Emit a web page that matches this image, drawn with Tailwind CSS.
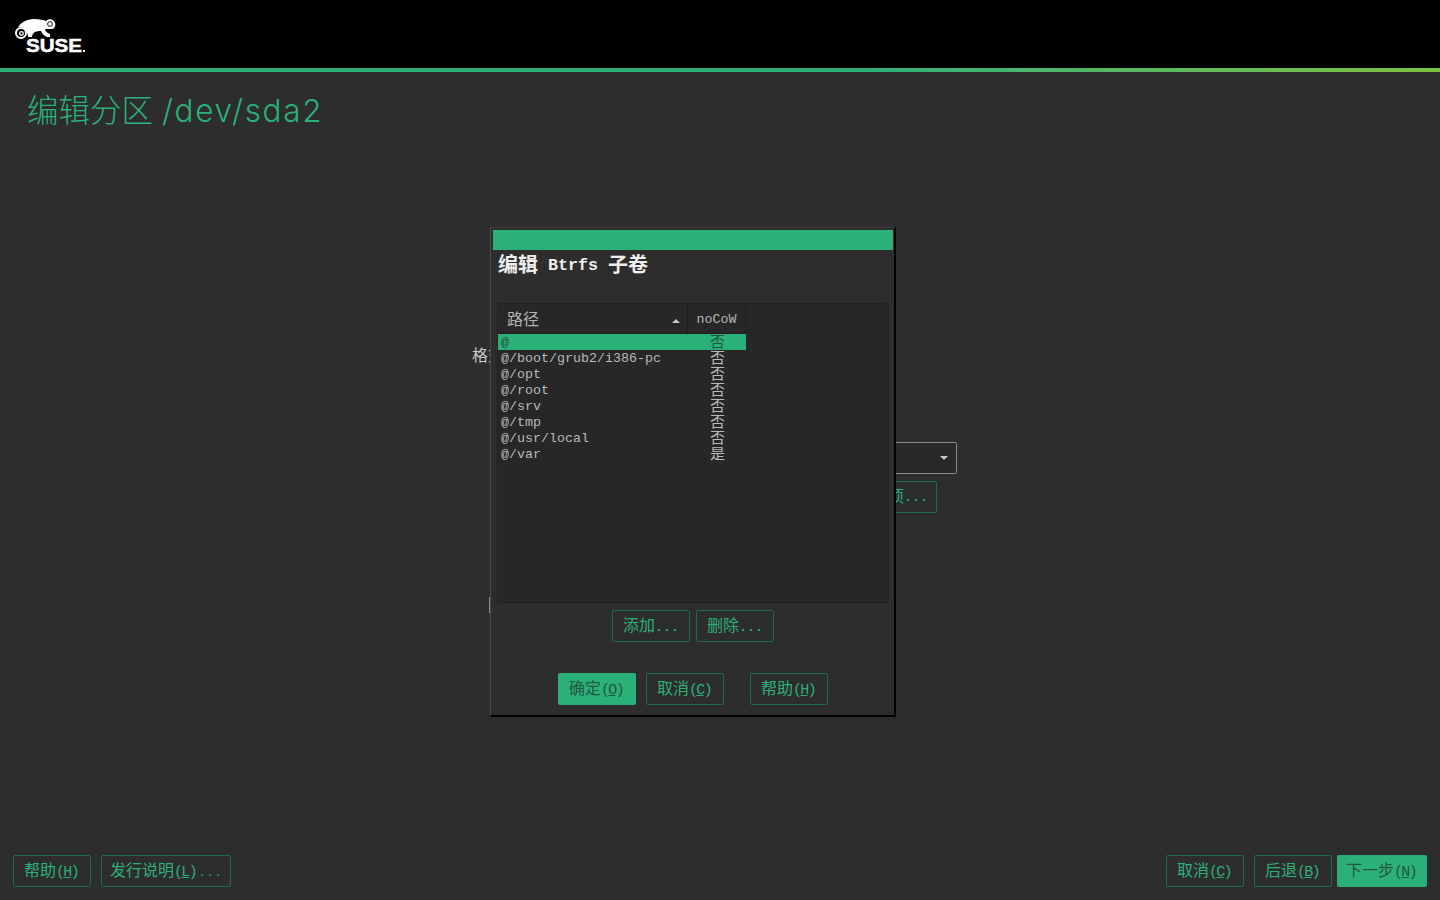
<!DOCTYPE html>
<html lang="zh-CN">
<head>
  <meta charset="UTF-8" />
  <title>编辑分区 /dev/sda2</title>
  <script src="https://cdn.jsdelivr.net/npm/@tailwindcss/browser@4"></script>
</head>
<body class="bg-[#2d2d2d] font-['Liberation_Mono','Noto_Sans_CJK_SC',monospace] overflow-hidden">
  <div class="relative flex flex-col w-[1440px] h-[900px]">
    <header class="h-[68px] bg-black pl-[14px] pt-[18px]">
      <svg width="74" height="42" viewBox="0 0 74 42" class="block">
        <path fill="#fff" d="M4 9C7 5 12 1 20 1c5 0 9 1 12 2 3-3 8-2 9 2 1 4-1 6-4 6h-6c0 2 2 4 5 5v3h-3c-3-1-5-4-6-6-2 0-4 0-6 1-2 1-3 3-3 5h-4c0-4-3-8-6-10-1 0-3 0-4 0z"/>
        <circle cx="7" cy="15" r="5" fill="#000" stroke="#fff" stroke-width="2"/>
        <circle cx="7.5" cy="15.5" r="1.8" fill="none" stroke="#fff" stroke-width="1.3"/>
        <circle cx="36" cy="6" r="2.4" fill="none" stroke="#000" stroke-width="0.9"/>
        <text x="12" y="34" fill="#fff" stroke="#fff" stroke-width="0.5" font-family="Liberation Sans" font-weight="700" font-size="19" textLength="56" lengthAdjust="spacingAndGlyphs">SUSE</text>
        <rect x="69" y="32" width="2" height="2" fill="#fff"/>
      </svg>
    </header>
    <div class="h-1 bg-gradient-to-r from-[#2bb07a] from-60% to-[#7fc13d]"></div>

    <h1 class="pl-[27px] pt-[17px] h-[50px] text-[31.5px] leading-[44px] font-light text-[#2bb07a] font-['Inter','Noto_Sans_CJK_SC',sans-serif]">编辑分区 <span class="tracking-[1.7px]">/dev/sda2</span></h1>

    <!-- form behind the dialog -->
    <main class="flex-1 relative">
      <div class="ml-[472px] w-[485px] pt-[223px] flex flex-col text-[16px] text-[#c8c8c8]">
        <div class="h-[24px] leading-[24px]">格式</div>
        <div class="mt-[73px] self-end w-[200px] h-[32px] border border-[#8a8a8a] rounded-[2px] bg-[#282828] flex items-center justify-end pr-[8px]">
          <span class="border-x-[4px] border-x-transparent border-t-[4px] border-t-[#c8c8c8]"></span>
        </div>
        <div class="mt-[7px] mr-[20px] self-end w-[160px] h-[32px] border border-[#1c6b4c] rounded-[2px] text-[#2bb07a] flex items-center justify-end pr-[8px] pt-px">格式选项<span class="text-[13.33px] font-bold">...</span></div>
        <div class="mt-[84px] ml-[17px] w-[20px] h-[16px] border-l border-[#8a8a8a]"></div>
      </div>
    </main>

    <footer class="h-[45px] pl-[13px] pr-[13px] flex text-[16px] text-[#2bb07a]">
      <button class="w-[78px] h-[32px] pt-[2px] pr-[2px] border border-[#1c6b4c] rounded-[2px]">帮助<span class="text-[15px] tracking-[-1.7px]">(<u>H</u>)</span></button>
      <button class="ml-[10px] w-[130px] h-[32px] pt-[2px] border border-[#1c6b4c] rounded-[2px]">发行说明<span class="text-[15px] tracking-[-1.7px]">(<u>L</u>)</span><span class="text-[13.33px] text-[#1f8a5f] font-bold pl-[2px]">...</span></button>
      <button class="ml-auto w-[78px] h-[32px] pt-[2px] pr-[2px] border border-[#1c6b4c] rounded-[2px]">取消<span class="text-[15px] tracking-[-1.7px]">(<u>C</u>)</span></button>
      <button class="ml-[10px] w-[78px] h-[32px] pt-[2px] pr-[2px] border border-[#1c6b4c] rounded-[2px]">后退<span class="text-[15px] tracking-[-1.7px]">(<u>B</u>)</span></button>
      <button class="ml-[5px] w-[90px] h-[32px] pt-[2px] pr-[2px] bg-[#2bb07a] rounded-[2px] text-[#23573f]">下一步<span class="text-[15px] tracking-[-1.7px]">(<u>N</u>)</span></button>
    </footer>

    <!-- subvolume dialog -->
    <section class="absolute left-[490px] top-[227px] w-[406px] h-[490px] bg-[#2d2d2d] border border-l-[#4a4a4a] border-t-[#3c3c3c] border-r-2 border-b-2 border-r-black border-b-black pl-[2px] pt-[2px] pr-[1px] flex flex-col">
      <div class="h-[20px] bg-[#2bb07a] shrink-0"></div>
      <h2 class="h-[30px] pl-[5px] pt-[2px] mb-[-2px] text-[20px] leading-[28px] font-bold text-[#eeeeee] whitespace-pre">编辑<span class="text-[16.67px] align-[2px]"> Btrfs </span>子卷</h2>
      <div class="mt-[25px] ml-[4px] w-[392px] h-[300px] shrink-0 border border-[#222] rounded-[3px] bg-[#272727]">
        <div class="flex h-[30px] text-[#b4b4b4]">
          <div class="w-[190px] border-r border-b border-[#1e1e1e] flex items-center pl-[9px] pr-[7px] pt-[4px] text-[16px]">
            <span>路径</span>
            <span class="ml-auto border-x-[4px] border-x-transparent border-b-[4px] border-b-[#c8c8c8]"></span>
          </div>
          <div class="w-[58px] border-r border-b border-[#1e1e1e] flex items-center justify-center pt-[2px] text-[13.33px]">noCoW</div>
        </div>
        <ul class="w-[248px] text-[13.33px] leading-[18px] text-[#b8b8b8]">
          <li class="flex h-[16px] bg-[#2bb07a] text-[#23573f] pl-[3px]"><span class="w-[209px]">@</span><span class="text-[15px] leading-[20px]">否</span></li>
          <li class="flex h-[16px] pl-[3px]"><span class="w-[209px]">@/boot/grub2/i386-pc</span><span class="text-[15px] leading-[20px]">否</span></li>
          <li class="flex h-[16px] pl-[3px]"><span class="w-[209px]">@/opt</span><span class="text-[15px] leading-[20px]">否</span></li>
          <li class="flex h-[16px] pl-[3px]"><span class="w-[209px]">@/root</span><span class="text-[15px] leading-[20px]">否</span></li>
          <li class="flex h-[16px] pl-[3px]"><span class="w-[209px]">@/srv</span><span class="text-[15px] leading-[20px]">否</span></li>
          <li class="flex h-[16px] pl-[3px]"><span class="w-[209px]">@/tmp</span><span class="text-[15px] leading-[20px]">否</span></li>
          <li class="flex h-[16px] pl-[3px]"><span class="w-[209px]">@/usr/local</span><span class="text-[15px] leading-[20px]">否</span></li>
          <li class="flex h-[16px] pl-[3px]"><span class="w-[209px]">@/var</span><span class="text-[15px] leading-[20px]">是</span></li>
        </ul>
      </div>
      <div class="mt-[7px] ml-[119px] flex gap-[6px] text-[16px] text-[#2bb07a]">
        <button class="w-[78px] h-[32px] pt-[2px] border border-[#1c6b4c] rounded-[2px]">添加<span class="text-[13.33px] font-bold">...</span></button>
        <button class="w-[78px] h-[32px] pt-[2px] border border-[#1c6b4c] rounded-[2px]">删除<span class="text-[13.33px] font-bold">...</span></button>
      </div>
      <div class="mt-[31px] ml-[65px] flex text-[16px] text-[#2bb07a]">
        <button class="w-[78px] h-[32px] pt-[2px] pr-[2px] bg-[#2bb07a] rounded-[2px] text-[#23573f]">确定<span class="text-[15px] tracking-[-1.7px]">(<u>O</u>)</span></button>
        <button class="ml-[10px] w-[78px] h-[32px] pt-[2px] pr-[2px] border border-[#1c6b4c] rounded-[2px]">取消<span class="text-[15px] tracking-[-1.7px]">(<u>C</u>)</span></button>
        <button class="ml-[26px] w-[78px] h-[32px] pt-[2px] pr-[2px] border border-[#1c6b4c] rounded-[2px]">帮助<span class="text-[15px] tracking-[-1.7px]">(<u>H</u>)</span></button>
      </div>
    </section>
  </div>
</body>
</html>
